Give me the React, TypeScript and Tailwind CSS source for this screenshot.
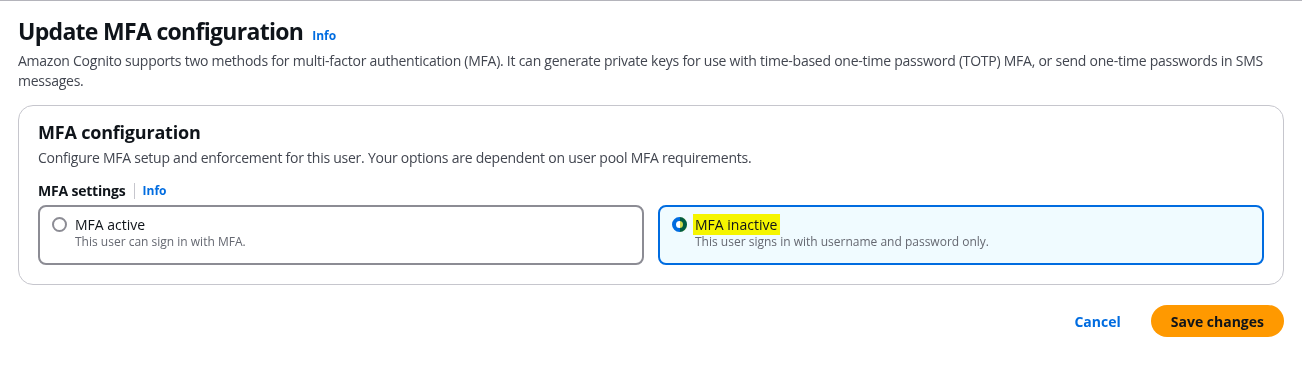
import React from 'react';

function InfoLink({ className = '' }: { className?: string }) {
  return <span className={`text-[12px] font-bold text-[#006ce0] ${className}`}>Info</span>;
}

function RadioTile({
  label,
  description,
  checked,
  highlight,
}: {
  label: string;
  description: string;
  checked?: boolean;
  highlight?: boolean;
}) {
  return (
    <div
      className={`flex-1 rounded-lg border-2 h-[60px] pl-[12px] pt-[9px] ${
        checked ? 'border-[#006ce0] bg-[#f0fbff]' : 'border-[#8c8c94] bg-white'
      }`}
    >
      <div className="flex items-start gap-[8px]">
        {checked ? (
          <span className="relative mt-[1px] w-[15px] h-[15px] rounded-full border-[4px] border-[#006ce0] bg-white shrink-0">
            <span className="absolute -right-[4px] -top-[4px] w-[7px] h-[15px] rounded-r-full bg-[#b8c800] mix-blend-multiply opacity-70" />
          </span>
        ) : (
          <span className="mt-[1px] w-[15px] h-[15px] rounded-full border-2 border-[#8c8c94] bg-white shrink-0" />
        )}
        <div className="flex flex-col">
          <span className="text-[14px] leading-[18px] text-[#0f141a]">
            {highlight ? (
              <span className="bg-[#f5f500] -ml-[2px] pl-[2px] pr-[3px] py-[1px]">{label}</span>
            ) : (
              label
            )}
          </span>
          <span className="text-[12px] leading-[16px] text-[#656871]">{description}</span>
        </div>
      </div>
    </div>
  );
}

export default function App() {
  return (
    <div
      className="w-[1302px] h-[365px] bg-white border-t border-[#b4b4bb] px-[18px] pt-[14px]"
      style={{ fontFamily: '"Open Sans", "Noto Sans", Arial, sans-serif' }}
    >
      {/* Header */}
      <div className="flex items-baseline gap-[9px]">
        <h1 className="text-[23px] leading-[32px] font-bold text-[#0f141a] tracking-[-0.7px]">
          Update MFA configuration
        </h1>
        <InfoLink />
      </div>
      <p className="mt-[4px] text-[14px] leading-[20px] text-[#424650] tracking-[-0.25px] pr-[4px]">
        Amazon Cognito supports two methods for multi-factor authentication (MFA). It can generate private keys
        for use with time-based one-time password (TOTP) MFA, or send one-time passwords in SMS messages.
      </p>

      {/* Card */}
      <div className="mt-[14px] rounded-[15px] border border-[#c6c6cd] pl-[19px] pr-[19px] pt-[14px] pb-[19px]">
        <h2 className="text-[18px] leading-[24px] font-bold text-[#0f141a] tracking-[-0.2px]">MFA configuration</h2>
        <p className="mt-[4px] text-[14px] leading-[20px] text-[#424650] tracking-[-0.25px]">
          Configure MFA setup and enforcement for this user. Your options are dependent on user pool MFA
          requirements.
        </p>

        <div className="mt-[14px] flex items-center">
          <span className="text-[14px] leading-[18px] font-bold text-[#0f141a] tracking-[-0.2px]">MFA settings</span>
          <span className="mx-[8px] h-[16px] w-px bg-[#c6c6cd]" />
          <InfoLink />
        </div>

        <div className="mt-[5px] flex gap-[14px]">
          <RadioTile label="MFA active" description="This user can sign in with MFA." />
          <RadioTile
            label="MFA inactive"
            description="This user signs in with username and password only."
            checked
            highlight
          />
        </div>
      </div>

      {/* Actions */}
      <div className="mt-[20px] flex items-center justify-end gap-[30px]">
        <button className="text-[14px] font-bold text-[#006ce0]">Cancel</button>
        <button className="h-[32px] px-[20px] rounded-full bg-[#ff9900] text-[14px] font-bold text-[#0f141a]">
          Save changes
        </button>
      </div>
    </div>
  );
}
